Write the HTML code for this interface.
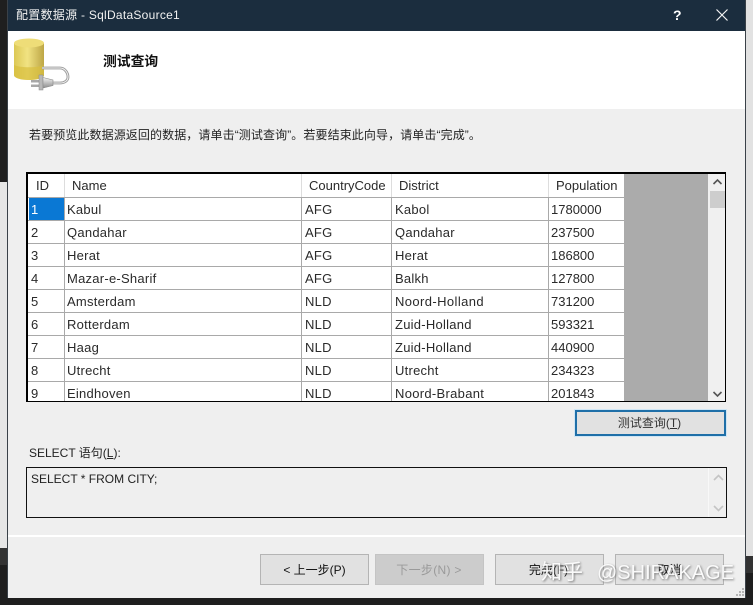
<!DOCTYPE html>
<html><head><meta charset="utf-8">
<style>
*{box-sizing:border-box}
html,body{margin:0;padding:0}
body{width:753px;height:605px;position:relative;overflow:hidden;background:#1e1e1e;font-family:"Liberation Sans","Noto Sans CJK SC",sans-serif;font-size:13px;color:#1a1a1a}
.a{position:absolute}
.t{position:absolute;white-space:nowrap;line-height:16px}
.c{position:absolute;white-space:nowrap;line-height:16px;letter-spacing:.25px;color:#2a2a2a;margin-top:1px}
.c.z{letter-spacing:0}
.h{position:absolute;background:#a9a9a9}
.btn{position:absolute;top:554px;height:31px;width:109px;background:#e1e1e1;border:1px solid #b4b4b4;text-align:center;line-height:30px;font-size:12px;color:#111}
</style></head><body>
<div class="a" style="left:0;top:0;width:8px;height:182px;background:#1f1f1f"></div>
<div class="a" style="left:0;top:182px;width:8px;height:366px;background:#e6e6e6"></div>
<div class="a" style="left:0;top:548px;width:8px;height:17px;background:#333"></div>
<div class="a" style="left:746px;top:0;width:7px;height:556px;background:#e2e2e2"></div>
<div class="a" style="left:746px;top:556px;width:7px;height:17px;background:#333"></div>
<div class="a" style="left:7px;top:0;width:739px;height:598px;background:#efefef;border-left:1px solid #3a4148;border-right:1px solid #3a4148"></div>
<div class="a" style="left:8px;top:0;width:737px;height:31px;background:#1b2d3e"></div>
<div class="t" style="left:16px;top:7px;color:#f2f2f2;font-size:12px;letter-spacing:.27px">配置数据源 - SqlDataSource1</div>
<div class="t" style="left:673px;top:7px;color:#fff;font-size:14px;font-weight:bold">?</div>
<svg class="a" style="left:715px;top:8px" width="14" height="14" viewBox="0 0 14 14"><path d="M1.5 1.5L12.5 12.5M12.5 1.5L1.500 12.5" stroke="#f4f4f4" stroke-width="1.2" fill="none"/></svg>
<div class="a" style="left:8px;top:31px;width:737px;height:78px;background:#fff"></div>
<svg class="a" style="left:12px;top:37px" width="60" height="55" viewBox="0 0 60 55">
<defs><linearGradient id="g" x1="0" x2="1" y1="0" y2="0"><stop offset="0" stop-color="#dcc855"/><stop offset=".45" stop-color="#f1e382"/><stop offset="1" stop-color="#bda646"/></linearGradient>
<linearGradient id="m" x1="0" x2="0" y1="0" y2="1"><stop offset="0" stop-color="#f4f4f4"/><stop offset="1" stop-color="#8c8c8c"/></linearGradient></defs>
<path d="M2 6V38C2 41 9 43 17 43S32 41 32 38V6Z" fill="url(#g)"/>
<path d="M2 28V38C2 41 9 43 17 43S32 41 32 38V28C26 31 8 31 2 28Z" fill="#d9bf3e" opacity=".7"/>
<ellipse cx="17" cy="6" rx="15" ry="4.500" fill="#eedd78"/>
<path d="M30 31H48C53 31 56 36 56 40C56 44 52 46 48 46H41" fill="none" stroke="#9a9a9a" stroke-width="2.800"/>
<path d="M30 31H48C53 31 56 36 56 40C56 44 52 46 48 46H41" fill="none" stroke="#f0f0f0" stroke-width="1"/>
<rect x="19" y="43" width="9" height="2.500" fill="#a8a8a8"/>
<rect x="19" y="47.500" width="9" height="2.500" fill="#a8a8a8"/>
<rect x="27" y="38" width="4" height="15" fill="#b8b8b8" stroke="#8a8a8a" stroke-width=".5"/>
<path d="M31 40.500L41 43V48.500L31 51Z" fill="url(#m)" stroke="#8a8a8a" stroke-width=".6"/>
</svg>
<div class="t" style="left:103px;top:54px;font-size:13.800px;font-weight:bold;color:#111">测试查询</div>
<div class="t" style="left:29px;top:127px;font-size:12px;letter-spacing:.1px;color:#222">若要预览此数据源返回的数据，请单击“测试查询”。若要结束此向导，请单击“完成”。</div>

<div class="a" style="left:26px;top:172px;width:700px;height:230px;background:#fff;border:1px solid #000;border-width:2px 1px 1px 2px;overflow:hidden">
<div class="a" style="left:596px;top:0;width:84px;height:230px;background:#ababab"></div>
<div class="a" style="left:680px;top:0;width:18px;height:230px;background:#f0f0f0"></div>
<div class="a" style="left:682px;top:17px;width:15px;height:17px;background:#cdcdcd"></div>
<svg class="a" style="left:684px;top:4px" width="11" height="8"><path d="M1.5 6L5.500 2L9.500 6" fill="none" stroke="#555" stroke-width="1.6"/></svg>
<svg class="a" style="left:684px;top:216px" width="11" height="8"><path d="M1.5 2L5.500 6L9.500 2" fill="none" stroke="#555" stroke-width="1.6"/></svg>
<div class="a" style="left:1px;top:24px;width:36px;height:22px;background:#0a78d4"></div>
<div class="h" style="left:0;top:23px;width:596px;height:1px"></div>
<div class="h" style="left:0;top:46px;width:596px;height:1px"></div>
<div class="h" style="left:0;top:69px;width:596px;height:1px"></div>
<div class="h" style="left:0;top:92px;width:596px;height:1px"></div>
<div class="h" style="left:0;top:115px;width:596px;height:1px"></div>
<div class="h" style="left:0;top:138px;width:596px;height:1px"></div>
<div class="h" style="left:0;top:161px;width:596px;height:1px"></div>
<div class="h" style="left:0;top:184px;width:596px;height:1px"></div>
<div class="h" style="left:0;top:207px;width:596px;height:1px"></div>
<div class="h" style="left:36px;top:24px;width:1px;height:206px"></div>
<div class="h" style="left:273px;top:24px;width:1px;height:206px"></div>
<div class="h" style="left:363px;top:24px;width:1px;height:206px"></div>
<div class="h" style="left:520px;top:24px;width:1px;height:206px"></div>
<div class="a" style="left:36px;top:0;width:1px;height:23px;background:#ddd"></div>
<div class="a" style="left:273px;top:0;width:1px;height:23px;background:#ddd"></div>
<div class="a" style="left:363px;top:0;width:1px;height:23px;background:#ddd"></div>
<div class="a" style="left:520px;top:0;width:1px;height:23px;background:#ddd"></div>
<div class="c z" style="left:8px;top:3px">ID</div><div class="c z" style="left:44px;top:3px">Name</div><div class="c z" style="left:281px;top:3px">CountryCode</div><div class="c z" style="left:371px;top:3px">District</div><div class="c z" style="left:528px;top:3px">Population</div>
<div class="c" style="left:3px;top:27px;color:#fff">1</div><div class="c" style="left:39px;top:27px">Kabul</div><div class="c" style="left:277px;top:27px">AFG</div><div class="c" style="left:367px;top:27px">Kabol</div><div class="c z" style="left:523px;top:27px">1780000</div>
<div class="c" style="left:3px;top:50px">2</div><div class="c" style="left:39px;top:50px">Qandahar</div><div class="c" style="left:277px;top:50px">AFG</div><div class="c" style="left:367px;top:50px">Qandahar</div><div class="c z" style="left:523px;top:50px">237500</div>
<div class="c" style="left:3px;top:73px">3</div><div class="c" style="left:39px;top:73px">Herat</div><div class="c" style="left:277px;top:73px">AFG</div><div class="c" style="left:367px;top:73px">Herat</div><div class="c z" style="left:523px;top:73px">186800</div>
<div class="c" style="left:3px;top:96px">4</div><div class="c" style="left:39px;top:96px">Mazar-e-Sharif</div><div class="c" style="left:277px;top:96px">AFG</div><div class="c" style="left:367px;top:96px">Balkh</div><div class="c z" style="left:523px;top:96px">127800</div>
<div class="c" style="left:3px;top:119px">5</div><div class="c" style="left:39px;top:119px">Amsterdam</div><div class="c" style="left:277px;top:119px">NLD</div><div class="c" style="left:367px;top:119px;letter-spacing:.4px">Noord-Holland</div><div class="c z" style="left:523px;top:119px">731200</div>
<div class="c" style="left:3px;top:142px">6</div><div class="c" style="left:39px;top:142px">Rotterdam</div><div class="c" style="left:277px;top:142px">NLD</div><div class="c" style="left:367px;top:142px">Zuid-Holland</div><div class="c z" style="left:523px;top:142px">593321</div>
<div class="c" style="left:3px;top:165px">7</div><div class="c" style="left:39px;top:165px">Haag</div><div class="c" style="left:277px;top:165px">NLD</div><div class="c" style="left:367px;top:165px">Zuid-Holland</div><div class="c z" style="left:523px;top:165px">440900</div>
<div class="c" style="left:3px;top:188px">8</div><div class="c" style="left:39px;top:188px">Utrecht</div><div class="c" style="left:277px;top:188px">NLD</div><div class="c" style="left:367px;top:188px">Utrecht</div><div class="c z" style="left:523px;top:188px">234323</div>
<div class="c" style="left:3px;top:211px">9</div><div class="c" style="left:39px;top:211px">Eindhoven</div><div class="c" style="left:277px;top:211px">NLD</div><div class="c" style="left:367px;top:211px;letter-spacing:.3px">Noord-Brabant</div><div class="c z" style="left:523px;top:211px">201843</div>
</div>

<div class="a" style="left:575px;top:410px;width:151px;height:26px;background:#e1e1e1;border:2px solid #1f6fa8;outline:1px solid #cfe6f5;text-align:center;line-height:22px;font-size:12px;color:#333;padding-right:2px">测试查询(<u>T</u>)</div>
<div class="t" style="left:29px;top:445px;font-size:12px;color:#222">SELECT 语句(<u>L</u>):</div>
<div class="a" style="left:26px;top:467px;width:701px;height:51px;background:#efefef;border:1px solid #111"></div>
<div class="t" style="left:31px;top:471px;font-size:12px;color:#222">SELECT * FROM CITY;</div>
<div class="a" style="left:708px;top:468px;width:1px;height:49px;background:#f8f8f8"></div>
<svg class="a" style="left:712px;top:473px" width="13" height="9"><path d="M2 7L6.500 2.500L11 7" fill="none" stroke="#c4c4c4" stroke-width="1.6"/></svg>
<svg class="a" style="left:712px;top:504px" width="13" height="9"><path d="M2 2L6.500 6.500L11 2" fill="none" stroke="#c4c4c4" stroke-width="1.6"/></svg>

<div class="a" style="left:8px;top:535px;width:737px;height:2px;background:#fff"></div>
<div class="btn" style="left:260px">&lt; 上一步(P)</div>
<div class="btn" style="left:375px;background:#cccccc;border-color:#c4c4c4;color:#9a9a9a;letter-spacing:.3px;padding-right:1px">下一步(N) &gt;</div>
<div class="btn" style="left:495px;padding-right:2px">完成(F)</div>
<div class="btn" style="left:615px">取消</div>
<svg class="a" style="left:735px;top:587px" width="10" height="10"><g fill="#b5b5b5"><rect x="7" y="1" width="2" height="2"/><rect x="4" y="4" width="2" height="2"/><rect x="7" y="4" width="2" height="2"/><rect x="1" y="7" width="2" height="2"/><rect x="4" y="7" width="2" height="2"/><rect x="7" y="7" width="2" height="2"/></g></svg>
<div class="t" style="left:541px;top:560px;font-size:21px;line-height:26px;color:#fff;opacity:.85;text-shadow:1px 1px 2px #666">知乎</div>
<div class="t" style="left:597px;top:560px;font-size:20px;line-height:26px;color:#fff;opacity:.85;text-shadow:1px 1px 2px #666">@SHIRAKAGE</div>
</body></html>
